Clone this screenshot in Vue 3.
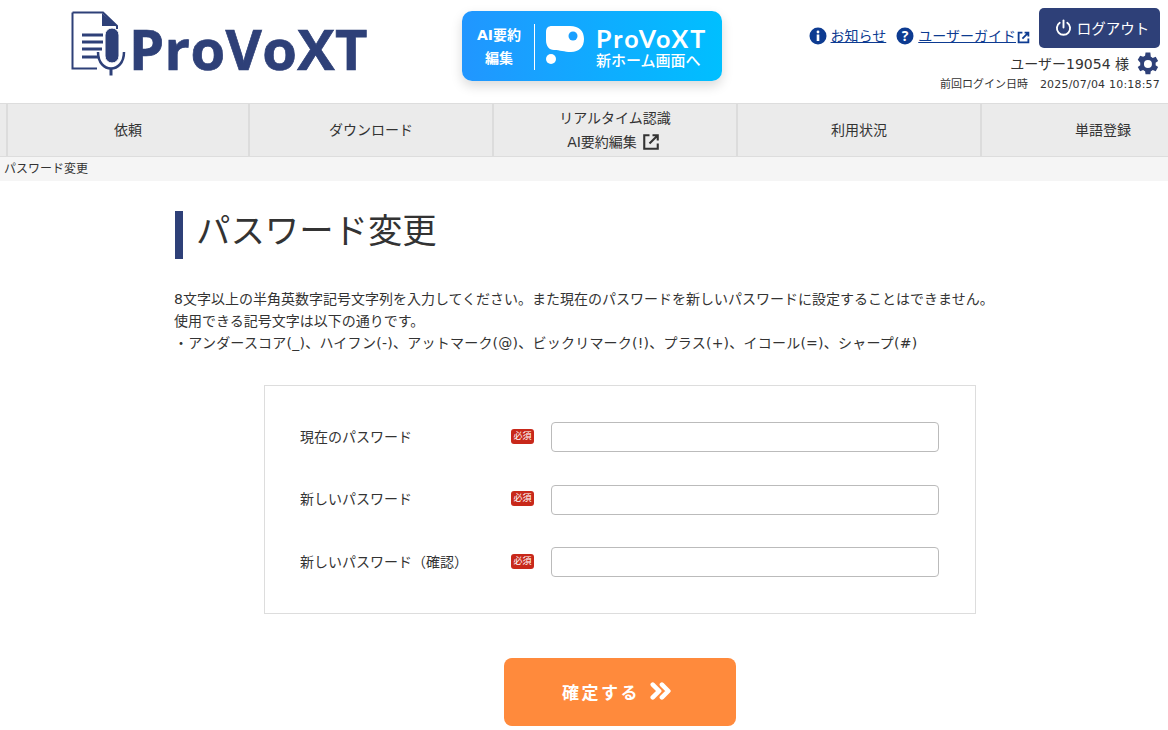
<template>
  <div class="page">
    <header class="header">
      <div class="logo">
        <svg class="logo-icon" width="56" height="66" viewBox="0 0 56 66">
          <path d="M1.5 1.5H32L46 15V18M1.5 1.5V57.5H26" fill="none" stroke="#2e4078" stroke-width="2"/>
          <path d="M31 2V15H46Z" fill="#2e4078"/>
          <path d="M11 24H32M11 31H32M11 38H31M11 46H28" stroke="#2e4078" stroke-width="3" fill="none"/>
          <rect x="34" y="17" width="14" height="35" rx="7" fill="#2e4078" stroke="#fff" stroke-width="1"/>
          <path d="M27 41C27 63 53 63 53 41" fill="none" stroke="#2e4078" stroke-width="2.5"/>
          <path d="M40 57V64.5" stroke="#2e4078" stroke-width="3"/>
        </svg>
        <span class="logo-text">ProVoXT</span>
      </div>
      <a class="banner">
        <div class="banner-left">AI要約<br>編集</div>
        <div class="banner-main">
          <svg width="38" height="40" viewBox="0 0 38 40">
            <path d="M6 1H24C33 1 38 6 38 14C38 22 33 27 25 27C18 27 14 25 8 25C3 25 0 21 0 15V7C0 3 2 1 6 1Z" fill="#fff"/>
            <circle cx="27" cy="11" r="4.5" fill="#1aa0ff"/>
            <circle cx="5" cy="34" r="5" fill="#fff"/>
          </svg>
          <div class="banner-text">
            <div class="banner-name">ProVoXT</div>
            <div class="banner-sub">新ホーム画面へ</div>
          </div>
        </div>
      </a>
      <div class="account">
        <div class="account-top">
          <a class="link">
            <svg width="18" height="18" viewBox="0 0 18 18">
              <circle cx="9" cy="9" r="8.5" fill="#0d3b91"/>
              <circle cx="9" cy="5" r="1.4" fill="#fff"/>
              <rect x="7.7" y="7.5" width="2.6" height="6.5" fill="#fff"/>
            </svg>
            <span>お知らせ</span>
          </a>
          <a class="link">
            <svg width="18" height="18" viewBox="0 0 18 18">
              <circle cx="9" cy="9" r="8.5" fill="#0d3b91"/>
              <text x="9" y="14" text-anchor="middle" class="q">?</text>
            </svg>
            <span>ユーザーガイド</span>
            <svg class="ext" width="13" height="13" viewBox="0 0 24 24">
              <path d="M10 3H3V21H21V14M14 3H21V10M21 3L10 14" fill="none" stroke="#0d3b91" stroke-width="3.4"/>
            </svg>
          </a>
          <button class="logout">
            <svg width="17" height="17" viewBox="0 0 18 18">
              <path d="M5 4A7 7 0 1 0 13 4" fill="none" stroke="#fff" stroke-width="2" stroke-linecap="round"/>
              <path d="M9 1.5V9" stroke="#fff" stroke-width="2" stroke-linecap="round"/>
            </svg>
            <span class="logout-text">ログアウト</span>
          </button>
        </div>
        <div class="user">
          <span class="user-name">ユーザー19054 様</span>
          <svg width="24" height="24" viewBox="2.5 1.5 20.5 21">
            <path fill="#2e4078" d="M19.4 13a7.6 7.6 0 0 0 0-2l2.2-1.7-2.1-3.6-2.6 1a7.6 7.6 0 0 0-1.7-1L14.8 2h-4.2l-.4 2.7a7.6 7.6 0 0 0-1.7 1l-2.6-1-2.1 3.6L6 11a7.6 7.6 0 0 0 0 2l-2.2 1.7 2.1 3.6 2.6-1a7.6 7.6 0 0 0 1.7 1l.4 2.7h4.2l.4-2.7a7.6 7.6 0 0 0 1.7-1l2.6 1 2.1-3.6ZM12.7 15.5a3.5 3.5 0 1 1 0-7 3.5 3.5 0 0 1 0 7Z"/>
          </svg>
        </div>
        <div class="last-login">
          <span>前回ログイン日時</span>
          <span class="login-time">2025/07/04 10:18:57</span>
        </div>
      </div>
    </header>

    <nav class="nav">
      <a v-for="item in navItems" :key="item" class="nav-item">{{ item }}</a>
      <a class="nav-item two-line">
        リアルタイム認識
        <span class="nav-sub">
          AI要約編集
          <svg width="18" height="18" viewBox="0 0 24 24">
            <path d="M10 3H3V21H21V14M14 3H21V10M21 3L10 14" fill="none" stroke="#333" stroke-width="2.8"/>
          </svg>
        </span>
      </a>
      <a v-for="item in navItemsAfter" :key="item" class="nav-item">{{ item }}</a>
    </nav>

    <div class="breadcrumb">パスワード変更</div>

    <main class="main">
      <h1 class="title">パスワード変更</h1>
      <p class="desc">
        8文字以上の半角英数字記号文字列を入力してください。また現在のパスワードを新しいパスワードに設定することはできません。<br>
        使用できる記号文字は以下の通りです。<br>
        <span class="symbols">・アンダースコア(_)、ハイフン(-)、アットマーク(@)、ビックリマーク(!)、プラス(+)、イコール(=)、シャープ(#)</span>
      </p>
      <form class="form" @submit.prevent>
        <div v-for="field in fields" :key="field" class="row">
          <label class="label">{{ field }}</label>
          <span class="required">必須</span>
          <input class="input" type="password">
        </div>
      </form>
      <button class="submit">
        確定する
        <svg width="22" height="20" viewBox="0 0 24 20">
          <path d="M3 3L10 10L3 17M13 3L20 10L13 17" fill="none" stroke="#fff" stroke-width="5" stroke-linecap="round" stroke-linejoin="round"/>
        </svg>
      </button>
    </main>
  </div>
</template>

<script setup>
const navItems = ["依頼", "ダウンロード"];
const navItemsAfter = ["利用状況", "単語登録"];
const fields = ["現在のパスワード", "新しいパスワード", "新しいパスワード（確認）"];
</script>

<style>
html, body {
  margin: 0;
  background: #fff;
  overflow: hidden;
}
</style>

<style scoped>
.page {
  width: 1168px;
  height: 730px;
  overflow: hidden;
  font-family: "DejaVu Sans", "Noto Sans CJK JP", sans-serif;
  font-size: 14px;
  color: #333;
}

.header {
  height: 103px;
  display: flex;
  align-items: flex-start;
  position: relative;
}

.logo {
  margin: 11px 0 0 71px;
  display: flex;
  align-items: flex-start;
  width: 300px;
}

.logo-icon {
  flex-shrink: 0;
}

.logo-text {
  margin: -1px 0 0 2px;
  font-family: "Open Sans", sans-serif;
  font-weight: 700;
  font-size: 56px;
  line-height: 76px;
  color: #2e4078;
  letter-spacing: 0.4px;
  -webkit-text-stroke: 0.7px #2e4078;
}

.banner {
  margin: 11px 0 0 91px;
  width: 260px;
  height: 70px;
  box-sizing: border-box;
  padding: 13px 14px 12px 14px;
  display: flex;
  align-items: center;
  color: #fff;
  background: linear-gradient(90deg, #2196ff, #00bfff);
  border-radius: 10px;
  box-shadow: 0 5px 12px rgba(0, 0, 0, 0.15);
}

.banner-left {
  flex-shrink: 0;
  width: 46px;
  padding-right: 12px;
  height: 46px;
  white-space: nowrap;
  text-align: center;
  font-size: 14px;
  font-weight: 700;
  line-height: 23px;
  border-right: 1px solid #fff;
}

.banner-main {
  display: flex;
  align-items: center;
  margin-left: 11px;
  gap: 12px;
}

.banner-main svg {
  flex-shrink: 0;
  margin-top: -3px;
}

.banner-name {
  font-family: "Lato", sans-serif;
  font-weight: 700;
  font-size: 25px;
  line-height: 26px;
  letter-spacing: 2px;
  white-space: nowrap;
}

.banner-sub {
  font-family: "Noto Sans CJK JP", sans-serif;
  font-size: 15px;
  font-weight: 500;
  line-height: 18px;
  white-space: nowrap;
}

.account {
  position: absolute;
  top: 8px;
  right: 8px;
  text-align: right;
}

.account-top {
  display: flex;
  justify-content: flex-end;
  align-items: center;
  gap: 10px;
}

.link {
  display: flex;
  align-items: center;
  gap: 4px;
  color: #0d3b91;
  font-size: 14px;
  line-height: 20px;
  margin-top: 16px;
}

.link span {
  text-decoration: underline;
}

.q {
  font-family: "Open Sans", sans-serif;
  font-weight: 700;
  font-size: 14px;
  fill: #fff;
}

.ext {
  margin-left: -3px;
  margin-top: 3px;
}

.logout {
  width: 121px;
  height: 40px;
  margin-left: -1px;
  padding: 0 0 2px 5px;
  border: 0;
  border-radius: 5px;
  background: #2e4078;
  color: #fff;
  font-family: inherit;
  font-size: 14px;
  display: flex;
  align-items: center;
  justify-content: center;
  gap: 5px;
}

.logout-text {
  font-size: 14.5px;
}

.user {
  margin-top: 4px;
  display: flex;
  justify-content: flex-end;
  align-items: center;
  gap: 7px;
  height: 24px;
  font-size: 14px;
}

.user-name {
  margin-bottom: 2px;
}

.last-login {
  margin-top: 1px;
  font-size: 11px;
  line-height: 16px;
  display: flex;
  justify-content: flex-end;
  gap: 12px;
}

.login-time {
  letter-spacing: 0.2px;
}

.nav {
  height: 54px;
  box-sizing: border-box;
  display: flex;
  padding-left: 6px;
  width: 1240px;
  background: #ebebeb;
  border-top: 1px solid #ddd;
  border-bottom: 1px solid #ddd;
}

.nav-item {
  width: 244px;
  box-sizing: border-box;
  border-left: 2px solid #dcdcdc;
  display: flex;
  flex-direction: column;
  align-items: center;
  justify-content: center;
  font-size: 14px;
  line-height: 24px;
  color: #333;
}

.nav-item:first-child {
  width: 242px;
}

.nav-sub {
  display: flex;
  align-items: center;
  gap: 5px;
  margin-right: 3px;
}

.breadcrumb {
  height: 24px;
  background: #f5f5f5;
  font-size: 12px;
  line-height: 24px;
  padding-left: 4px;
}

.main {
  width: 820px;
  margin-left: 174px;
}

.title {
  margin: 30px 0 0 1px;
  height: 48px;
  border-left: 8px solid #2e4078;
  padding-left: 13px;
  font-size: 34.4px;
  font-weight: 400;
  line-height: 40px;
  color: #333;
}

.desc {
  margin: 29px 0 0;
  font-size: 14px;
  line-height: 22px;
  white-space: nowrap;
}

.symbols {
  letter-spacing: 0.23px;
}

.form {
  width: 712px;
  height: 229px;
  margin: 31px 0 0 90px;
  box-sizing: border-box;
  border: 1px solid #ddd;
  padding: 36px 36px 0 35px;
  display: flex;
  flex-direction: column;
  gap: 32.5px;
}

.row {
  display: flex;
  align-items: center;
  height: 30px;
}

.label {
  width: 211px;
  margin-bottom: 3px;
  font-size: 14px;
}

.required {
  width: 23px;
  height: 15px;
  margin-bottom: 2px;
  background: #c8281a;
  border-radius: 3px;
  color: #fff;
  font-size: 9px;
  line-height: 15px;
  text-align: center;
  white-space: nowrap;
}

.input {
  width: 388px;
  height: 30px;
  box-sizing: border-box;
  margin-left: 17px;
  border: 1px solid #bbb;
  border-radius: 4px;
  background: #fff;
}

.submit {
  display: flex;
  align-items: center;
  justify-content: center;
  gap: 10px;
  width: 232px;
  height: 68px;
  margin: 44px 0 0 330px;
  padding: 0 6px 2px 0;
  border: 0;
  border-radius: 8px;
  background: #ff8a3c;
  color: #fff;
  font-family: inherit;
  font-size: 17px;
  font-weight: 700;
  letter-spacing: 2.5px;
}
</style>
